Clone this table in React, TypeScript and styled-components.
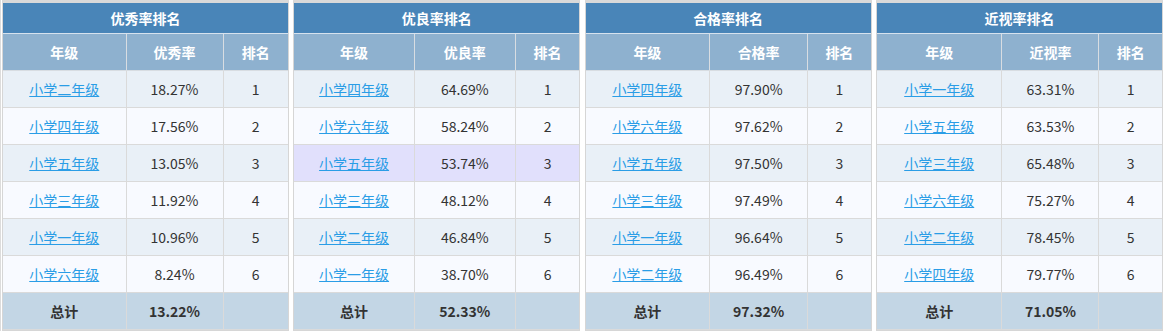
import React from 'react';
import styled, { createGlobalStyle } from 'styled-components';

type Row = { grade: string; rate: string; rank: number; active?: boolean };

type RankTable = {
  title: string;
  label: string;
  cols: number[];
  rows: Row[];
  total: string;
};

const tables: RankTable[] = [
  {
    title: '优秀率排名',
    label: '优秀率',
    cols: [123, 97, 65],
    rows: [
      { grade: '小学二年级', rate: '18.27%', rank: 1 },
      { grade: '小学四年级', rate: '17.56%', rank: 2 },
      { grade: '小学五年级', rate: '13.05%', rank: 3 },
      { grade: '小学三年级', rate: '11.92%', rank: 4 },
      { grade: '小学一年级', rate: '10.96%', rank: 5 },
      { grade: '小学六年级', rate: '8.24%', rank: 6 },
    ],
    total: '13.22%',
  },
  {
    title: '优良率排名',
    label: '优良率',
    cols: [120, 101, 64],
    rows: [
      { grade: '小学四年级', rate: '64.69%', rank: 1 },
      { grade: '小学六年级', rate: '58.24%', rank: 2 },
      { grade: '小学五年级', rate: '53.74%', rank: 3, active: true },
      { grade: '小学三年级', rate: '48.12%', rank: 4 },
      { grade: '小学二年级', rate: '46.84%', rank: 5 },
      { grade: '小学一年级', rate: '38.70%', rank: 6 },
    ],
    total: '52.33%',
  },
  {
    title: '合格率排名',
    label: '合格率',
    cols: [124, 98, 63],
    rows: [
      { grade: '小学四年级', rate: '97.90%', rank: 1 },
      { grade: '小学六年级', rate: '97.62%', rank: 2 },
      { grade: '小学五年级', rate: '97.50%', rank: 3 },
      { grade: '小学三年级', rate: '97.49%', rank: 4 },
      { grade: '小学一年级', rate: '96.64%', rank: 5 },
      { grade: '小学二年级', rate: '96.49%', rank: 6 },
    ],
    total: '97.32%',
  },
  {
    title: '近视率排名',
    label: '近视率',
    cols: [125, 97, 63],
    rows: [
      { grade: '小学一年级', rate: '63.31%', rank: 1 },
      { grade: '小学五年级', rate: '63.53%', rank: 2 },
      { grade: '小学三年级', rate: '65.48%', rank: 3 },
      { grade: '小学六年级', rate: '75.27%', rank: 4 },
      { grade: '小学二年级', rate: '78.45%', rank: 5 },
      { grade: '小学四年级', rate: '79.77%', rank: 6 },
    ],
    total: '71.05%',
  },
];

const GlobalStyle = createGlobalStyle`
  html, body {
    margin: 0;
    padding: 0;
    background: #fff;
    font-family: "Microsoft YaHei", "Noto Sans CJK SC", "Noto Sans", sans-serif;
    color: #333;
  }
`;

const Board = styled.div`
  display: flex;
  gap: 4.3px;
  padding: 0 0 0 1px;
  border-left: 1px solid #dcdcdc;
  overflow: hidden;
`;

const Panel = styled.div`
  box-sizing: border-box;
  flex: 0 0 287px;
  border: 1px solid #d6d6d6;
  border-top: 3px solid #d9d9d9;
`;

const Table = styled.table`
  width: 100%;
  border-collapse: collapse;
  table-layout: fixed;
  font-size: 14px;
`;

const TitleCell = styled.th`
  height: 30px;
  padding: 0;
  background: #4985b8;
  color: #fff;
  font-weight: bold;
  font-size: 14px;
  text-align: center;
  border-bottom: 1px solid #d6e2ee;
`;

const HeadCell = styled.th`
  height: 36px;
  padding: 0;
  background: #8eb1cf;
  color: #fff;
  font-weight: bold;
  font-size: 14px;
  text-align: center;
  border: 1px solid #d8dde2;
  border-top: none;
  &:first-child { border-left: none; }
  &:last-child { border-right: none; }
`;

const BodyRow = styled.tr<{ $odd: boolean; $active?: boolean }>`
  background: ${(p) => (p.$active ? '#e1e0fc' : p.$odd ? '#e9f0f7' : '#f8faff')};
`;

const TotalRow = styled.tr`
  background: #c3d6e5;
  font-weight: bold;
`;

const Cell = styled.td`
  height: 36px;
  padding: 0;
  text-align: center;
  border: 1px solid #dadada;
  &:first-child { border-left: none; }
  &:last-child { border-right: none; }
`;

const GradeLink = styled.a`
  color: #2a9de6;
  text-decoration: underline;
  cursor: pointer;
`;

const RankPanel = ({ table }: { table: RankTable }) => (
  <Panel>
    <Table>
      <colgroup>
        {table.cols.map((w, i) => (
          <col key={i} style={{ width: w }} />
        ))}
      </colgroup>
      <thead>
        <tr>
          <TitleCell colSpan={3}>{table.title}</TitleCell>
        </tr>
        <tr>
          <HeadCell>年级</HeadCell>
          <HeadCell>{table.label}</HeadCell>
          <HeadCell>排名</HeadCell>
        </tr>
      </thead>
      <tbody>
        {table.rows.map((r, i) => (
          <BodyRow key={r.grade} $odd={i % 2 === 0} $active={r.active}>
            <Cell>
              <GradeLink>{r.grade}</GradeLink>
            </Cell>
            <Cell>{r.rate}</Cell>
            <Cell>{r.rank}</Cell>
          </BodyRow>
        ))}
        <TotalRow>
          <Cell>总计</Cell>
          <Cell>{table.total}</Cell>
          <Cell />
        </TotalRow>
      </tbody>
    </Table>
  </Panel>
);

export default function App() {
  return (
    <>
      <GlobalStyle />
      <Board>
        {tables.map((t) => (
          <RankPanel key={t.title} table={t} />
        ))}
      </Board>
    </>
  );
}
